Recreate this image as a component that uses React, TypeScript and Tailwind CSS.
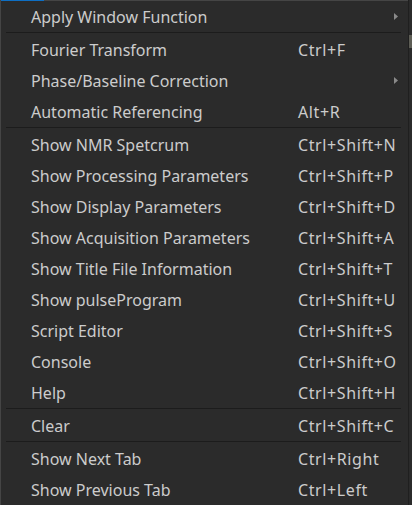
import React from 'react';

type Item =
  | { kind: 'item'; label: string; shortcut?: string; submenu?: boolean }
  | { kind: 'sep' };

const ITEMS: Item[] = [
  { kind: 'item', label: 'Apply Window Function', submenu: true },
  { kind: 'sep' },
  { kind: 'item', label: 'Fourier Transform', shortcut: 'Ctrl+F' },
  { kind: 'item', label: 'Phase/Baseline Correction', submenu: true },
  { kind: 'item', label: 'Automatic Referencing', shortcut: 'Alt+R' },
  { kind: 'sep' },
  { kind: 'item', label: 'Show NMR Spetcrum', shortcut: 'Ctrl+Shift+N' },
  { kind: 'item', label: 'Show Processing Parameters', shortcut: 'Ctrl+Shift+P' },
  { kind: 'item', label: 'Show Display Parameters', shortcut: 'Ctrl+Shift+D' },
  { kind: 'item', label: 'Show Acquisition Parameters', shortcut: 'Ctrl+Shift+A' },
  { kind: 'item', label: 'Show Title File Information', shortcut: 'Ctrl+Shift+T' },
  { kind: 'item', label: 'Show pulseProgram', shortcut: 'Ctrl+Shift+U' },
  { kind: 'item', label: 'Script Editor', shortcut: 'Ctrl+Shift+S' },
  { kind: 'item', label: 'Console', shortcut: 'Ctrl+Shift+O' },
  { kind: 'item', label: 'Help', shortcut: 'Ctrl+Shift+H' },
  { kind: 'sep' },
  { kind: 'item', label: 'Clear', shortcut: 'Ctrl+Shift+C' },
  { kind: 'sep' },
  { kind: 'item', label: 'Show Next Tab', shortcut: 'Ctrl+Right' },
  { kind: 'item', label: 'Show Previous Tab', shortcut: 'Ctrl+Left' },
];

function SubArrow() {
  return (
    <svg width="4" height="7" viewBox="0 0 4 7" className="shrink-0">
      <path d="M0 0 L4 3.5 L0 7 Z" fill="#8a8a8a" />
    </svg>
  );
}

export default function App() {
  return (
    <div className="w-[412px] h-[505px] flex bg-[#2b2b2b] overflow-hidden font-['Noto_Sans',sans-serif] text-[16px] text-[#cccccc]">
      {/* Menu panel */}
      <div className="flex-1 flex flex-col border-l border-[#454545]">
        {/* top border with blue accent */}
        <div className="flex h-px shrink-0">
          <div className="w-[43px] bg-[#0e6fc4]" />
          <div className="flex-1 bg-[#454545]" />
        </div>

        {ITEMS.map((it, i) =>
          it.kind === 'sep' ? (
            <div key={i} className="h-[2px] shrink-0 flex items-start pl-[5px] pr-[7px]">
              <div className="h-px w-full bg-[#1c1c1c]" />
            </div>
          ) : (
            <div key={i} className="h-[31px] shrink-0 flex items-center pl-[30px] pr-[10px]">
              <span className="w-[267px] whitespace-nowrap">{it.label}</span>
              <span className="flex-1 whitespace-nowrap tracking-[0.6px]">{it.shortcut}</span>
              {it.submenu && <SubArrow />}
            </div>
          )
        )}
      </div>

      {/* right scrollbar strip */}
      <div className="w-[4px] flex flex-col border-l border-[#1f1f1f]">
        <div className="h-[35px]" />
        <div className="h-[13px] bg-[#5d5d55]" />
      </div>
    </div>
  );
}
